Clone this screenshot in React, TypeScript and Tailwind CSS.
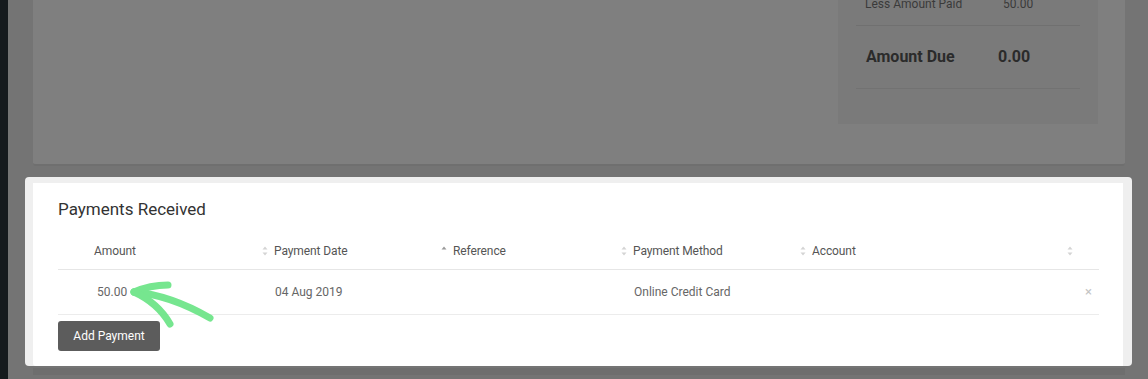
import React from "react";

function SortIcon({ active = false }: { active?: boolean }) {
  return (
    <svg width="6" height="10" viewBox="0 0 6 10" className="shrink-0">
      <path d="M3 0.5 L5.5 3.5 H0.5 Z" fill={active ? "#9a9a9a" : "#d4d4d4"} />
      {!active && <path d="M3 9.5 L5.5 6.5 H0.5 Z" fill="#d4d4d4" />}
    </svg>
  );
}

function GreenArrow() {
  return (
    <svg
      width="100"
      height="60"
      viewBox="0 0 100 60"
      className="pointer-events-none absolute left-[120px] top-[275px]"
    >
      <g
        stroke="#6fe58a"
        strokeWidth="7"
        strokeLinecap="round"
        strokeLinejoin="round"
        fill="none"
        opacity="0.95"
      >
        <path d="M14 17 Q30 10 48 10" />
        <path d="M14 17 Q50 20 90 43" />
        <path d="M14 17 Q38 28 50 49" />
      </g>
    </svg>
  );
}

const headers = [
  { label: "Amount", icon: null as null | "sort" | "up", pad: "pl-[36px]" },
  { label: "Payment Date", icon: "sort" as const, pad: "pl-[4px]" },
  { label: "Reference", icon: "up" as const, pad: "pl-[4px]" },
  { label: "Payment Method", icon: "sort" as const, pad: "pl-[4px]" },
  { label: "Account", icon: "sort" as const, pad: "pl-[4px]" },
];

export default function App() {
  return (
    <div
      className="relative flex h-[379px] w-[1148px] overflow-hidden bg-[#747474]"
      style={{ fontFamily: "Roboto, 'Liberation Sans', sans-serif" }}
    >
      <div className="h-full w-[8px] shrink-0 bg-[#151a1d]" />

      <div className="flex flex-1 flex-col">
        {/* dimmed invoice card */}
        <div className="ml-[25px] h-[166px] w-[1092px] shrink-0 rounded-b-[3px] border-b-2 border-[#6f6f6f] bg-[#7f7f7f]">
          <div className="ml-[805px] -mt-[17px] h-[141px] w-[260px] bg-[#7a7a7a] px-[18px]">
            <div className="flex h-[43px] items-center border-b border-[#707070] text-[12px] text-[#3a3a3a]">
              <span className="w-[147px] pl-[9px]">Less Amount Paid</span>
              <span>50.00</span>
            </div>
            <div className="flex h-[63px] items-center border-b border-[#727272] text-[16px] font-bold text-[#2b2b2b]">
              <span className="w-[142px] pl-[10px]">Amount Due</span>
              <span>0.00</span>
            </div>
          </div>
        </div>

        {/* highlighted payments card */}
        <div className="ml-[17px] mt-[11px] w-[1107px] rounded-[4px] bg-[#efefef] pl-[8px] pr-[9px] pt-[6px]">
          <div className="rounded-bl-[3px] bg-white pb-[15px] pl-[25px] pr-[24px] pt-[14px]">
            <div className="h-[24px] text-[17px] leading-[24px] text-[#333]">
              Payments Received
            </div>

            <div className="mt-[10px] grid h-[39px] grid-cols-[200px_179px_180px_179px_267px_1fr] items-center border-b border-[#e6e6e6] pt-[2px] text-[12px] text-[#555]">
              {headers.map((h) => (
                <div key={h.label} className={`flex items-center gap-[6px] ${h.pad}`}>
                  {h.icon === "sort" && <SortIcon />}
                  {h.icon === "up" && <SortIcon active />}
                  <span className="tracking-[-0.1px]">{h.label}</span>
                </div>
              ))}
              <div className="flex items-center pl-[4px]">
                <SortIcon />
              </div>
            </div>

            <div className="grid h-[45px] grid-cols-[200px_179px_180px_179px_267px_1fr] items-center border-b border-[#ececec] text-[12px] text-[#666]">
              <div className="pl-[39px]">50.00</div>
              <div className="pl-[17px]">04 Aug 2019</div>
              <div />
              <div className="pl-[17px]">Online Credit Card</div>
              <div />
              <div className="pl-[22px] text-[13px] text-[#c4c4c4]">×</div>
            </div>

            <button
              type="button"
              className="mt-[6px] h-[30px] w-[102px] rounded-[3px] bg-[#5c5c5c] text-[12px] text-white"
            >
              Add Payment
            </button>
          </div>
        </div>

        <div className="ml-[25px] mt-[2px] h-[7px] w-[1092px] bg-[#6e6e6e]" />
      </div>

      <GreenArrow />
    </div>
  );
}
